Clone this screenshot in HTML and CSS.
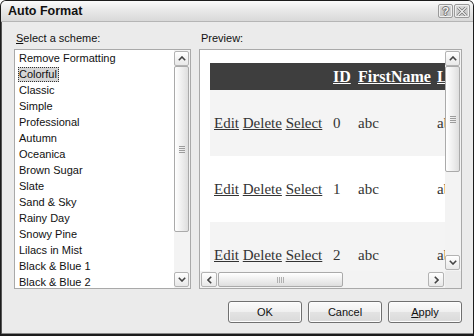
FILE: index.html
```html
<!DOCTYPE html>
<html>
<head>
<meta charset="utf-8">
<link rel="stylesheet" href="styles.css">
</head>
<body>
<div class="window">
  <div class="titlebar">
    <span class="title">Auto Format</span>
    <div class="tbtns">
      <span class="tbtn help">?</span>
      <span class="tbtn close"><svg width="10" height="9" viewBox="0 0 10 9"><path d="M1 0.5 L9 8.5 M9 0.5 L1 8.5" stroke="#6e6e6e" stroke-width="2.6"/><path d="M1 0.5 L9 8.5 M9 0.5 L1 8.5" stroke="#f4f4f4" stroke-width="1.2"/></svg></span>
    </div>
  </div>
  <div class="body">
    <div class="cols">
      <div class="col left">
        <div class="label"><u>S</u>elect a scheme:</div>
        <div class="listbox">
          <ul class="items">
            <li>Remove Formatting</li>
            <li><span class="sel">Colorful</span></li>
            <li>Classic</li>
            <li>Simple</li>
            <li>Professional</li>
            <li>Autumn</li>
            <li>Oceanica</li>
            <li>Brown Sugar</li>
            <li>Slate</li>
            <li>Sand &amp; Sky</li>
            <li>Rainy Day</li>
            <li>Snowy Pine</li>
            <li>Lilacs in Mist</li>
            <li>Black &amp; Blue 1</li>
            <li>Black &amp; Blue 2</li>
          </ul>
          <div class="vs list-vs">
            <div class="arrow"><svg width="8" height="5" viewBox="0 0 8 5"><path d="M0.8 4.2 L4 1 L7.2 4.2" fill="none" stroke="#444" stroke-width="1.6"/></svg></div>
            <div class="thumb v"><span class="grip"></span></div>
            <div class="track"></div>
            <div class="arrow"><svg width="8" height="5" viewBox="0 0 8 5"><path d="M0.8 0.8 L4 4 L7.2 0.8" fill="none" stroke="#444" stroke-width="1.6"/></svg></div>
          </div>
        </div>
      </div>
      <div class="col right">
        <div class="label">Preview:</div>
        <div class="preview">
          <div class="viewport">
            <div class="gv">
              <div class="gv-row head">
                <div class="c c0"></div>
                <div class="c c1"><a>ID</a></div>
                <div class="c c2"><a>FirstName</a></div>
                <div class="c c3"><a>LastName</a></div>
              </div>
              <div class="gv-row alt">
                <div class="c c0"><a>Edit</a> <a>Delete</a> <a>Select</a></div>
                <div class="c c1">0</div>
                <div class="c c2">abc</div>
                <div class="c c3">abc</div>
              </div>
              <div class="gv-row">
                <div class="c c0"><a>Edit</a> <a>Delete</a> <a>Select</a></div>
                <div class="c c1">1</div>
                <div class="c c2">abc</div>
                <div class="c c3">abc</div>
              </div>
              <div class="gv-row alt">
                <div class="c c0"><a>Edit</a> <a>Delete</a> <a>Select</a></div>
                <div class="c c1">2</div>
                <div class="c c2">abc</div>
                <div class="c c3">abc</div>
              </div>
            </div>
          </div>
          <div class="vs pv-vs">
            <div class="arrow"><svg width="8" height="5" viewBox="0 0 8 5"><path d="M0.8 4.2 L4 1 L7.2 4.2" fill="none" stroke="#444" stroke-width="1.6"/></svg></div>
            <div class="thumb v pv-thumb"><span class="grip"></span></div>
            <div class="track"></div>
            <div class="arrow"><svg width="8" height="5" viewBox="0 0 8 5"><path d="M0.8 0.8 L4 4 L7.2 0.8" fill="none" stroke="#444" stroke-width="1.6"/></svg></div>
          </div>
          <div class="hs">
            <div class="arrow"><svg width="5" height="8" viewBox="0 0 5 8"><path d="M4.2 0.8 L1 4 L4.2 7.2" fill="none" stroke="#444" stroke-width="1.6"/></svg></div>
            <div class="thumb h"><span class="grip"></span></div>
            <div class="track"></div>
            <div class="arrow"><svg width="5" height="8" viewBox="0 0 5 8"><path d="M0.8 0.8 L4 4 L0.8 7.2" fill="none" stroke="#444" stroke-width="1.6"/></svg></div>
          </div>
          <div class="corner"></div>
        </div>
      </div>
    </div>
    <div class="buttons">
      <button class="btn">OK</button>
      <button class="btn">Cancel</button>
      <button class="btn"><u>A</u>pply</button>
    </div>
  </div>
</div>
</body>
</html>
```
FILE: styles.css
```css
* { box-sizing: border-box; }
html, body { margin: 0; padding: 0; }
body {
  width: 474px;
  height: 336px;
  overflow: hidden;
  background: #ffffff;
  font-family: "Liberation Sans", Arial, sans-serif;
  font-size: 11px;
  color: #000;
}
.window {
  width: 474px;
  height: 336px;
  border: 1px solid #1c1c1c;
  border-bottom-width: 2px;
  border-radius: 6px 6px 0 0;
  background: #ebebeb;
  display: flex;
  flex-direction: column;
  overflow: hidden;
  box-shadow: inset 1px 0 0 #555, inset 0 -1px 0 #888;
}
.titlebar {
  height: 21px;
  flex: none;
  display: flex;
  align-items: center;
  justify-content: space-between;
  padding: 0 3px 0 7px;
  background: linear-gradient(#fbfbfb, #e9e9e9 45%, #d9d9d9);
  border-bottom: 1px solid #b5b5b5;
}
.title {
  font-weight: bold;
  font-size: 12.5px;
  color: #111;
}
.tbtns { display: flex; gap: 1px; }
.tbtn {
  width: 15px;
  height: 14px;
  border: 1px solid #9a9a9a;
  border-radius: 2px;
  background: linear-gradient(#dadada, #c2c2c2);
  box-shadow: inset 0 0 0 1px #efefef;
  display: flex;
  align-items: center;
  justify-content: center;
  font-size: 11px;
  font-weight: bold;
  color: #f4f4f4;
  text-shadow: 1px 0 0 #6e6e6e, -1px 0 0 #6e6e6e, 0 1px 0 #6e6e6e, 0 -1px 0 #6e6e6e;
  line-height: 1;
}
.tbtn.close { width: 16px; }
.body {
  flex: 1;
  display: flex;
  flex-direction: column;
  padding: 9px 11px 0 13px;
}
.cols {
  display: flex;
  gap: 8px;
}
.col { display: flex; flex-direction: column; }
.col.left { width: 177px; }
.col.right { width: 263px; }
.label {
  height: 14px;
  line-height: 14px;
  padding-left: 2px;
  margin-bottom: 4px;
  color: #111;
}
.listbox {
  height: 240px;
  border: 1px solid #a9a9a9;
  background: #fff;
  display: flex;
}
.items {
  list-style: none;
  margin: 0;
  padding: 0;
  flex: 1;
}
.items li {
  height: 16px;
  line-height: 16px;
  padding-left: 4px;
  white-space: nowrap;
  color: #111;
}
.sel {
  display: inline-block;
  height: 15px;
  line-height: 13px;
  margin-left: -1px;
  padding: 0 1px 0 0;
  border: 1px dotted #333;
  background: #d6d6d6;
}
.vs {
  width: 16px;
  display: flex;
  flex-direction: column;
  background: #f3f3f3;
  padding: 1px 0;
}
.arrow {
  flex: none;
  height: 15px;
  width: 15px;
  border: 1px solid #b3b3b3;
  border-radius: 2px;
  background: linear-gradient(#ffffff, #e8e8e8);
  display: flex;
  align-items: center;
  justify-content: center;
}
.thumb {
  flex: none;
  border: 1px solid #aaaaaa;
  border-radius: 2px;
  display: flex;
  align-items: center;
  justify-content: center;
}
.thumb.v {
  width: 15px;
  height: 166px;
  background: linear-gradient(90deg, #ffffff, #ececec 60%, #dedede);
}
.thumb.v.pv-thumb { height: 106px; }
.thumb.v .grip {
  width: 6px;
  height: 7px;
  background: repeating-linear-gradient(#9c9c9c 0 1px, transparent 1px 2px);
}
.track { flex: 1; }
.preview {
  height: 240px;
  border: 1px solid #a9a9a9;
  background: #fff;
  display: grid;
  grid-template-columns: 1fr 16px;
  grid-template-rows: 1fr 17px;
}
.viewport {
  overflow: hidden;
  padding: 13px 0 0 10px;
  font-family: "Liberation Serif", "Times New Roman", serif;
  font-size: 15px;
  color: #333;
}
.gv { width: 320px; }
.gv-row {
  display: grid;
  grid-template-columns: 119px 25px 79px 97px;
  height: 66px;
  align-items: center;
}
.gv-row.head {
  height: 27px;
  background: #3e3e3e;
  color: #fff;
  font-weight: bold;
  font-size: 16px;
}
.gv-row.alt { background: #f4f4f4; }
.c {
  padding: 0 4px;
  white-space: nowrap;
  overflow: visible;
}
.gv a { text-decoration: underline; color: inherit; }
.pv-vs { grid-row: 1; grid-column: 2; }
.hs {
  grid-row: 2;
  grid-column: 1;
  display: flex;
  align-items: center;
  background: #f3f3f3;
  padding: 0 1px;
}
.hs .arrow { height: 15px; width: 16px; }
.thumb.h {
  height: 15px;
  width: 125px;
  margin-left: 1px;
  background: linear-gradient(#ffffff, #ececec 60%, #dedede);
}
.thumb.h .grip {
  width: 7px;
  height: 6px;
  background: repeating-linear-gradient(90deg, #b0b0b0 0 1px, transparent 1px 2px);
}
.corner {
  grid-row: 2;
  grid-column: 2;
  background: #ebebeb;
}
.buttons {
  margin-top: 12px;
  display: flex;
  justify-content: flex-end;
  gap: 6px;
}
.btn {
  width: 74px;
  height: 22px;
  border: 1px solid #707070;
  border-radius: 3px;
  background: linear-gradient(#fbfbfb, #f0f0f0 48%, #e3e3e3 52%, #dadada);
  box-shadow: inset 0 0 0 1px #fdfdfd;
  font-family: "Liberation Sans", Arial, sans-serif;
  font-size: 11px;
  color: #111;
  padding: 0;
}
```
